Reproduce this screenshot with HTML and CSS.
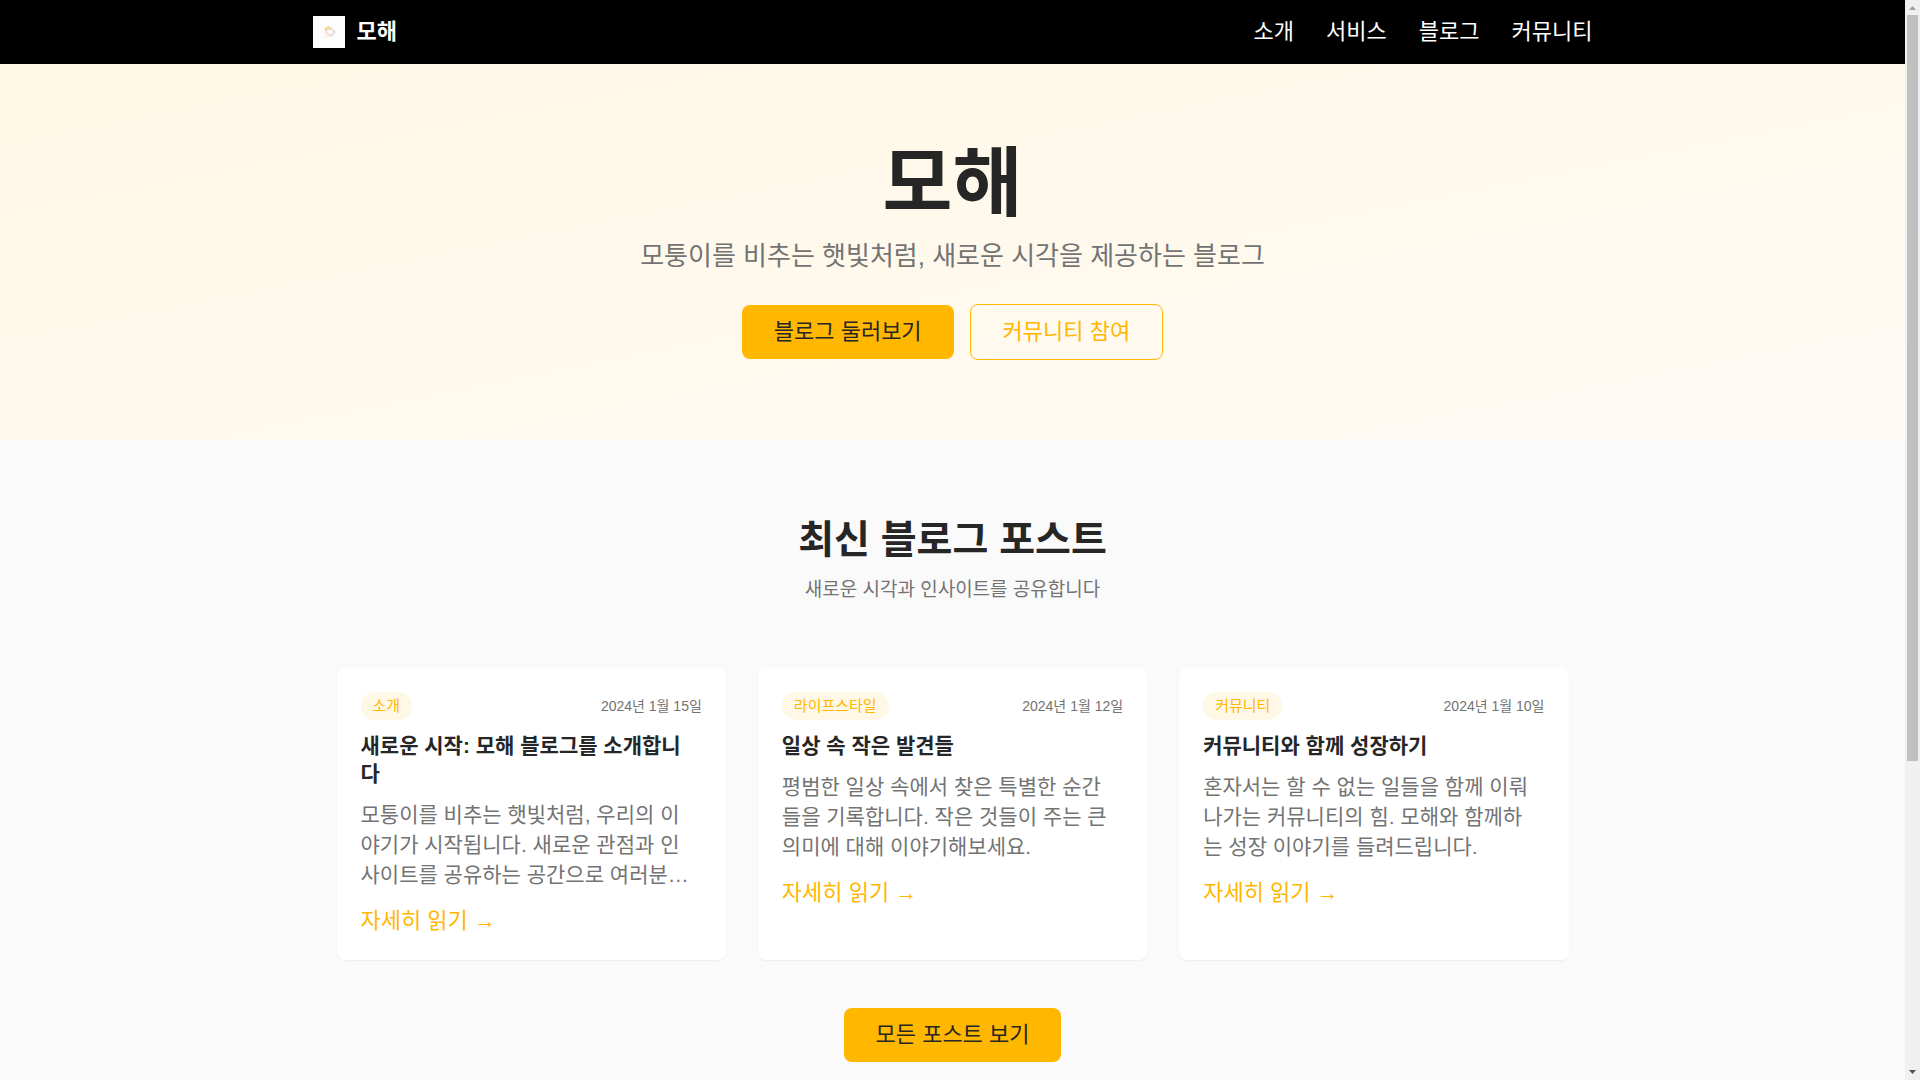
FILE: index.html
```html
<!DOCTYPE html>
<html lang="ko">
<head>
  <meta charset="UTF-8">
  <meta name="viewport" content="width=device-width, initial-scale=1.0">
  <title>모해</title>
  <link rel="stylesheet" href="styles.css">
</head>
<body>
  <div class="page">
    <header class="header">
      <div class="header-inner">
        <a href="#" class="logo">
          <svg class="logo-img" viewBox="0 0 32 32" aria-hidden="true">
            <rect width="32" height="32" fill="#fdfdfd"/>
            <path d="M11 13l4-3 4 2 3 4-3 5-4 0-3-3z" fill="#f8efe8"/>
            <path d="M12 14l3-3 4 2" fill="none" stroke="#f9d3a0" stroke-width="2"/>
            <path d="M13 15l3-2 4 1 1 2-3 3-3-1z" fill="#fff" stroke="#efd0be" stroke-width="1"/>
            <path d="M21 14l1 3-4 4" fill="none" stroke="#d9d9dc" stroke-width="1"/>
            <path d="M11 21h3" stroke="#f7dfc0" stroke-width="1"/>
          </svg>
          <span>모해</span>
        </a>
        <nav class="nav">
          <a href="#about">소개</a>
          <a href="#services">서비스</a>
          <a href="#blog">블로그</a>
          <a href="#community">커뮤니티</a>
        </nav>
      </div>
    </header>

    <main>
      <section class="hero">
        <h1>모해</h1>
        <p>모퉁이를 비추는 햇빛처럼, 새로운 시각을 제공하는 블로그</p>
        <div class="hero-buttons">
          <a href="#blog" class="btn btn-primary">블로그 둘러보기</a>
          <a href="#community" class="btn btn-outline">커뮤니티 참여</a>
        </div>
      </section>

      <section class="posts" id="blog">
        <div class="section-header">
          <h2>최신 블로그 포스트</h2>
          <p>새로운 시각과 인사이트를 공유합니다</p>
        </div>
        <div class="grid">
          <article class="card">
            <div class="card-meta">
              <span class="tag">소개</span>
              <time datetime="2024-01-15">2024년 1월 15일</time>
            </div>
            <h3>새로운 시작: 모해 블로그를 소개합니다</h3>
            <p class="excerpt">모퉁이를 비추는 햇빛처럼, 우리의 이야기가 시작됩니다. 새로운 관점과 인사이트를 공유하는 공간으로 여러분…</p>
            <a href="#" class="more">자세히 읽기 →</a>
          </article>
          <article class="card">
            <div class="card-meta">
              <span class="tag">라이프스타일</span>
              <time datetime="2024-01-12">2024년 1월 12일</time>
            </div>
            <h3>일상 속 작은 발견들</h3>
            <p class="excerpt">평범한 일상 속에서 찾은 특별한 순간들을 기록합니다. 작은 것들이 주는 큰 의미에 대해 이야기해보세요.</p>
            <a href="#" class="more">자세히 읽기 →</a>
          </article>
          <article class="card">
            <div class="card-meta">
              <span class="tag">커뮤니티</span>
              <time datetime="2024-01-10">2024년 1월 10일</time>
            </div>
            <h3>커뮤니티와 함께 성장하기</h3>
            <p class="excerpt">혼자서는 할 수 없는 일들을 함께 이뤄나가는 커뮤니티의 힘. 모해와 함께하는 성장 이야기를 들려드립니다.</p>
            <a href="#" class="more">자세히 읽기 →</a>
          </article>
        </div>
        <div class="posts-footer">
          <a href="#" class="btn btn-primary">모든 포스트 보기</a>
        </div>
      </section>
    </main>
    <footer class="footer"></footer>
  </div>
  <div class="scrollbar" aria-hidden="true">
    <svg class="arrow arrow-up" viewBox="0 0 15 15"><path d="M4 10h7L7.500 6z"/></svg>
    <div class="track"><div class="thumb"></div></div>
    <svg class="arrow arrow-down" viewBox="0 0 15 15"><path d="M4 5h7L7.500 9z"/></svg>
  </div>
</body>
</html>
```

FILE: styles.css
```css
* {
  margin: 0;
  padding: 0;
  box-sizing: border-box;
}
body {
  display: flex;
  height: 100vh;
  font-family: "Liberation Sans", "Noto Sans CJK KR", sans-serif;
  font-size: 22px;
  line-height: 30px;
  color: #262626;
  background-color: #fafafa;
}
a {
  color: inherit;
  text-decoration: none;
}

/* scroll area */
.page {
  flex: 1;
  overflow-y: auto;
  scrollbar-width: none;
}
.scrollbar {
  display: flex;
  flex-direction: column;
  width: 15px;
  background-color: #f0f0f0;
}
.arrow {
  width: 15px;
  height: 15px;
}
.arrow-up {
  fill: #a0a0a0;
}
.arrow-down {
  fill: #505050;
}
.track {
  flex: 1;
  padding: 0 2px;
}
.thumb {
  height: 71%;
  background-color: #c0c0c0;
}

/* header */
.header {
  position: sticky;
  top: 0;
  background-color: #000;
  color: #fff;
}
.header-inner {
  max-width: 1280px;
  height: 64px;
  margin: 0 auto;
  display: flex;
  align-items: center;
  justify-content: space-between;
}
.logo {
  display: flex;
  align-items: center;
  gap: 12px;
  font-weight: bold;
}
.logo-img {
  width: 32px;
  height: 32px;
}
.nav {
  display: flex;
  gap: 32px;
}

/* hero */
.hero {
  padding: 80px 24px;
  text-align: center;
  background: linear-gradient(to bottom right, #fff8e4, #fffaf5);
}
.hero h1 {
  font-size: 76px;
  line-height: 80px;
  margin-bottom: 16px;
}
.hero p {
  font-size: 26px;
  line-height: 32px;
  color: #737373;
  margin-bottom: 32px;
}
.hero-buttons {
  display: flex;
  justify-content: center;
  align-items: center;
  gap: 16px;
}
.btn {
  display: inline-block;
  padding: 12px 32px;
  border-radius: 8px;
}
.btn-primary {
  background-color: #ffb700;
  color: #262626;
}
.btn-outline {
  border: 1px solid #ffb700;
  color: #ffb700;
}

/* blog posts */
.posts {
  max-width: 1280px;
  margin: 0 auto;
  padding: 80px 24px;
}
.section-header {
  text-align: center;
  margin-bottom: 64px;
}
.section-header h2 {
  font-size: 39px;
  line-height: 40px;
  margin-bottom: 16px;
}
.section-header p {
  font-size: 19px;
  line-height: 28px;
  color: #737373;
}
.grid {
  display: grid;
  grid-template-columns: repeat(3, 1fr);
  gap: 32px;
}
.card {
  background-color: #fff;
  border-radius: 8px;
  padding: 24px;
  box-shadow: 0 1px 2px rgba(0, 0, 0, 0.06);
}
.card-meta {
  display: flex;
  align-items: center;
  justify-content: space-between;
  margin-bottom: 12px;
  font-size: 14px;
  line-height: 20px;
  color: #737373;
}
.tag {
  padding: 4px 12px;
  border-radius: 14px;
  background-color: #fff8e6;
  color: #ffb700;
  font-size: 15px;
}
.card h3 {
  font-size: 21px;
  line-height: 28px;
  padding-right: 8px;
  margin-bottom: 12px;
}
.excerpt {
  font-size: 21px;
  padding-right: 8px;
  color: #737373;
  margin-bottom: 16px;
}
.more {
  color: #ffb700;
}
.posts-footer {
  margin-top: 48px;
  text-align: center;
}
.footer {
  height: 380px;
  background-color: #000;
}
```
